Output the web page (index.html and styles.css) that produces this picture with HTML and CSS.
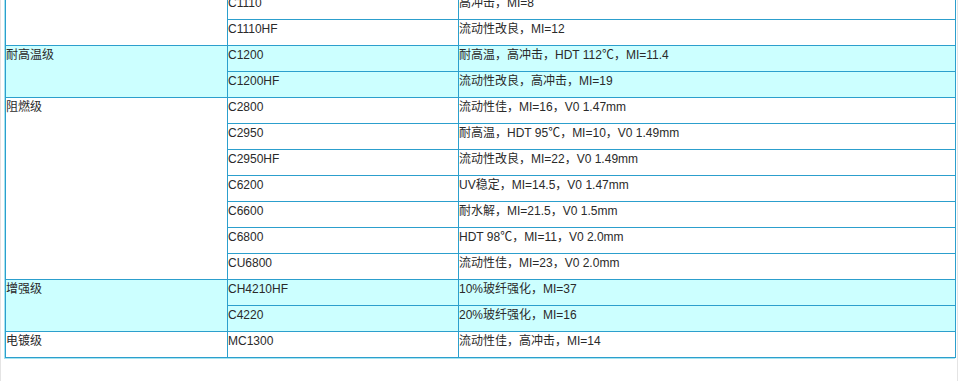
FILE: index.html
```html
<!DOCTYPE html>
<html lang="zh-CN">
<head>
<meta charset="utf-8">
<title>牌号</title>
<link rel="stylesheet" href="styles.css">
</head>
<body>
<div class="page">
  <table class="grades">
    <colgroup>
      <col class="c1"><col class="c2"><col class="c3">
    </colgroup>
    <tbody>
      <tr><td rowspan="2"></td><td>C1110</td><td>高冲击，MI=8</td></tr>
      <tr><td>C1110HF</td><td>流动性改良，MI=12</td></tr>
      <tr class="hl"><td rowspan="2">耐高温级</td><td>C1200</td><td>耐高温，高冲击，HDT 112℃，MI=11.4</td></tr>
      <tr class="hl"><td>C1200HF</td><td>流动性改良，高冲击，MI=19</td></tr>
      <tr><td rowspan="7">阻燃级</td><td>C2800</td><td>流动性佳，MI=16，V0 1.47mm</td></tr>
      <tr><td>C2950</td><td>耐高温，HDT 95℃，MI=10，V0 1.49mm</td></tr>
      <tr><td>C2950HF</td><td>流动性改良，MI=22，V0 1.49mm</td></tr>
      <tr><td>C6200</td><td>UV稳定，MI=14.5，V0 1.47mm</td></tr>
      <tr><td>C6600</td><td>耐水解，MI=21.5，V0 1.5mm</td></tr>
      <tr><td>C6800</td><td>HDT 98℃，MI=11，V0 2.0mm</td></tr>
      <tr><td>CU6800</td><td>流动性佳，MI=23，V0 2.0mm</td></tr>
      <tr class="hl"><td rowspan="2">增强级</td><td>CH4210HF</td><td>10%玻纤强化，MI=37</td></tr>
      <tr class="hl"><td>C4220</td><td>20%玻纤强化，MI=16</td></tr>
      <tr><td>电镀级</td><td>MC1300</td><td>流动性佳，高冲击，MI=14</td></tr>
    </tbody>
  </table>
</div>
</body>
</html>
```

FILE: styles.css
```css
html, body {
  margin: 0;
  padding: 0;
  background: #ffffff;
}

.page {
  width: 958px;
  height: 381px;
  border-left: 1px solid #e4e4e4;
  border-right: 1px solid #e4e4e4;
  padding-left: 4px;
  box-sizing: border-box;
  overflow: hidden;
}

.grades {
  margin-top: -7px;
  width: 950px;
  table-layout: fixed;
  border-collapse: collapse;
  font-family: "Liberation Sans", "Noto Sans CJK SC", sans-serif;
  font-size: 12px;
  color: #2a2a2a;
  box-shadow: -1px 1px 0 #a6e4f0;
}

.c1 { width: 222px; }
.c2 { width: 231px; }
.c3 { width: 497px; }

.grades td {
  border: 1px solid #2c9fcd;
  height: 26px;
  padding: 2px 0 0 0;
  vertical-align: top;
  line-height: 14px;
  white-space: nowrap;
  box-sizing: border-box;
}

.grades tr.hl td {
  background: #ccffff;
}
```
